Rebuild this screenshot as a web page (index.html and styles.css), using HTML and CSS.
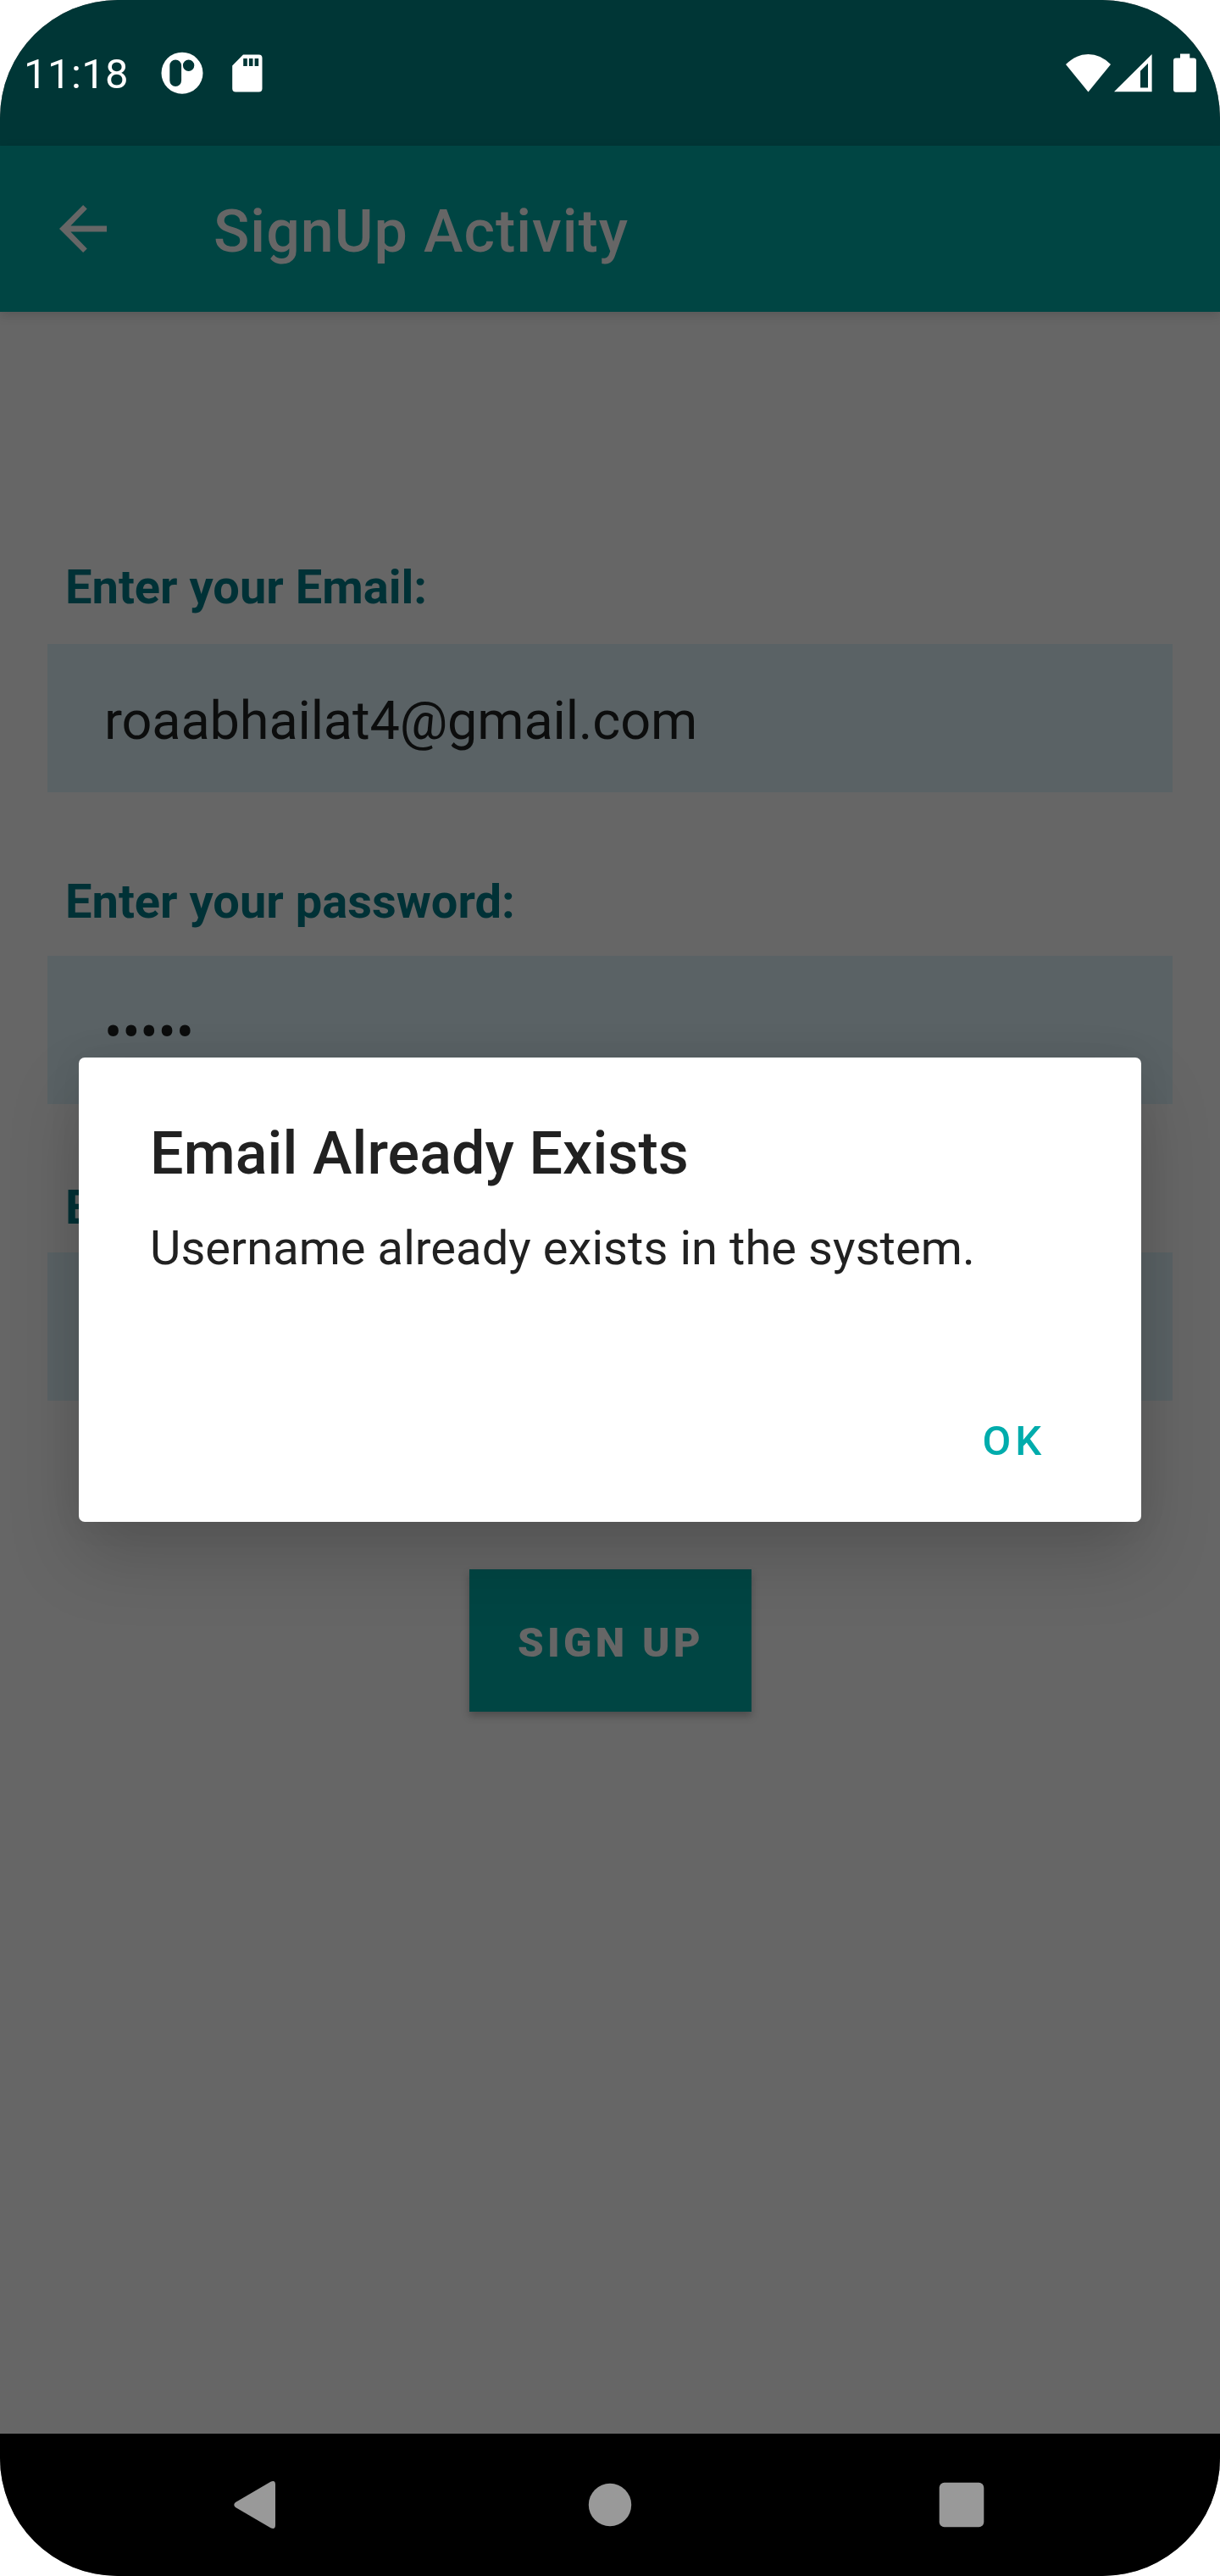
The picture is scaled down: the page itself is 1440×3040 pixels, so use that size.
FILE: index.html
```html
<!DOCTYPE html>
<html lang="en">
<head>
<meta charset="utf-8">
<title>SignUp Activity</title>
<link rel="stylesheet" href="styles.css">
</head>
<body>
<div class="screen">
  <header class="status-bar">
    <span class="clock">11:18</span>
    <svg class="status-icon" width="50" height="50" viewBox="0 0 50 50">
      <path fill="#fff" fill-rule="evenodd" d="M25 .7a24.5 24.5 0 1 1 0 49a24.5 24.5 0 1 1 0-49zM17.2 9.5a6.9 6.9 0 0 0-6.9 6.9v17.6a6.9 6.9 0 0 0 13.8 0V16.400a6.900 6.900 0 0 0-6.900-6.900zM32.600 9.500a6.700 6.700 0 1 0 0 13.400a6.700 6.700 0 1 0 0-13.400z"/>
    </svg>
    <svg class="status-icon sd-card" width="36" height="45" viewBox="0 0 36 45">
      <path fill="#fff" fill-rule="evenodd" d="M13 .4H31.500a4 4 0 0 1 4 4V40.500a4 4 0 0 1-4 4H4.200a4 4 0 0 1-4-4V13.600zM13.200 4.900V14h4.600V4.900zM19.900 4.900V14h4.600V4.900zM26.600 4.900V14h4.600V4.900z"/>
    </svg>
    <div class="system-icons">
      <svg width="53" height="46" viewBox="0 0 53 46"><path fill="#fff" d="M0 13Q12 1 26.500 1T53 13L26.500 45.500z"/></svg>
      <svg class="signal" width="45" height="46" viewBox="0 0 45 46"><path fill="#fff" fill-rule="evenodd" d="M0 45.300L44.600 1V45.300zM31 20.700V40.500h9V11.700z"/></svg>
      <svg class="battery" width="27" height="46" viewBox="0 0 27 46"><path fill="#fff" d="M8 .4h11.300v5H24a3 3 0 0 1 3 3V42.800a3 3 0 0 1-3 3H3a3 3 0 0 1-3-3V8.400a3 3 0 0 1 3-3h5z"/></svg>
    </div>
  </header>

  <div class="app-bar">
    <svg class="back-arrow" width="56" height="58" viewBox="0 0 56 58"><path fill="#666" d="M56 25.400H13.400L32.800 5.400L28.100 1L0 29L28.100 57L32.800 52.600L13.400 32.600H56z"/></svg>
    <h1 class="app-title">SignUp Activity</h1>
  </div>

  <main class="form">
    <div class="field-group">
      <label class="field-label">Enter your Email:</label>
      <div class="field">roaabhailat4@gmail.com</div>
    </div>
    <div class="field-group second">
      <label class="field-label">Enter your password:</label>
      <div class="field password">•••••</div>
    </div>
    <div class="field-group third">
      <label class="field-label">E</label>
      <div class="field"></div>
    </div>
    <button class="signup" type="button">SIGN UP</button>
  </main>

  <nav class="nav-bar">
    <svg width="50" height="56" viewBox="0 0 50 56"><path fill="#999" d="M43.500.8Q49 -1.500 49 4V52Q49 57.500 43.500 55.200L2 31Q-1.500 28 2 25z"/></svg>
    <svg class="home" width="52" height="52" viewBox="0 0 52 52"><circle cx="26" cy="26" r="25.200" fill="#999"/></svg>
    <svg width="54" height="54" viewBox="0 0 54 54"><rect x=".7" y=".7" width="52.600" height="52.600" rx="6" fill="#999"/></svg>
  </nav>

  <section class="dialog" role="dialog">
    <h2 class="dialog-title">Email Already Exists</h2>
    <p class="dialog-message">Username already exists in the system.</p>
    <div class="dialog-actions"><button class="dialog-ok" type="button">OK</button></div>
  </section>
</div>
</body>
</html>
```
FILE: styles.css
```css
* { box-sizing: border-box; }

body {
  margin: 0;
  background: #fff;
  font-family: Roboto, sans-serif;
}

h1, h2, p { margin: 0; }

button {
  border: 0;
  font-family: inherit;
}

svg {
  display: block;
  flex: none;
}

.screen {
  position: relative;
  display: flex;
  flex-direction: column;
  width: 1440px;
  height: 3040px;
  overflow: hidden;
  border-radius: 139px;
  background: #666;
}

.status-bar {
  display: flex;
  align-items: center;
  height: 172px;
  padding: 0 28px;
  background: #003636;
}

.clock {
  width: 162px;
  padding-top: 4px;
  color: #fff;
  font-size: 49px;
  line-height: 58px;
  letter-spacing: .4px;
}

.sd-card { margin-left: 34px; }

.system-icons {
  display: flex;
  margin-left: auto;
}

.signal { margin-left: 4px; }
.battery { margin-left: 25px; }

.app-bar {
  position: relative;
  z-index: 1;
  display: flex;
  align-items: center;
  height: 196px;
  padding-left: 70px;
  background: #004543;
  box-shadow: 0 4px 12px rgba(0, 0, 0, .14);
}

.app-title {
  margin-left: 126px;
  padding-top: 6px;
  color: #666;
  font-size: 70px;
  font-weight: 500;
  line-height: 82px;
  letter-spacing: .0137em;
}

.form {
  display: flex;
  flex: 1;
  flex-direction: column;
  padding: 292px 56px 0;
}

.field-group {
  display: flex;
  flex-direction: column;
  gap: 34px;
}

.second {
  gap: 31px;
  margin-top: 96px;
}

.third {
  gap: 20px;
  margin-top: 89px;
}

.field-label {
  padding-left: 21px;
  color: #003136;
  font-size: 56px;
  font-weight: 700;
  line-height: 66px;
}

.field {
  display: flex;
  align-items: center;
  height: 175px;
  padding: 6px 67px 0;
  background: #5a6265;
  color: #0c0d0d;
  font-size: 63px;
  letter-spacing: -.15px;
}

.password { letter-spacing: -.1px; }

.signup {
  align-self: center;
  width: 333px;
  height: 168px;
  margin-top: 199px;
  padding: 4px 0 0 2px;
  background: #004543;
  box-shadow: 0 5px 9px rgba(0, 0, 0, .25);
  color: #666;
  font-size: 49px;
  font-weight: 900;
  letter-spacing: .088em;
}

.nav-bar {
  display: flex;
  align-items: center;
  justify-content: space-between;
  height: 168px;
  padding: 0 278px 0 276px;
  background: #000;
}

.home { margin-left: 6px; }

.dialog {
  position: absolute;
  z-index: 2;
  top: 1248px;
  left: 93px;
  display: flex;
  flex-direction: column;
  width: 1254px;
  height: 548px;
  padding: 72px 84px 0;
  border-radius: 7px;
  background: #fff;
  box-shadow: 0 42px 84px rgba(0, 0, 0, .17), 0 0 40px rgba(0, 0, 0, .06);
  color: #212121;
}

.dialog-title {
  font-size: 70px;
  font-weight: 500;
  line-height: 82px;
  letter-spacing: .1px;
}

.dialog-message {
  margin-top: 38px;
  font-size: 56px;
  line-height: 66px;
  letter-spacing: .07px;
}

.dialog-actions {
  display: flex;
  justify-content: flex-end;
  margin-top: 166px;
  padding-right: 29px;
}

.dialog-ok {
  padding: 0;
  background: none;
  color: #00acac;
  font-size: 49px;
  font-weight: 500;
  line-height: 58px;
  letter-spacing: .1em;
}
```
